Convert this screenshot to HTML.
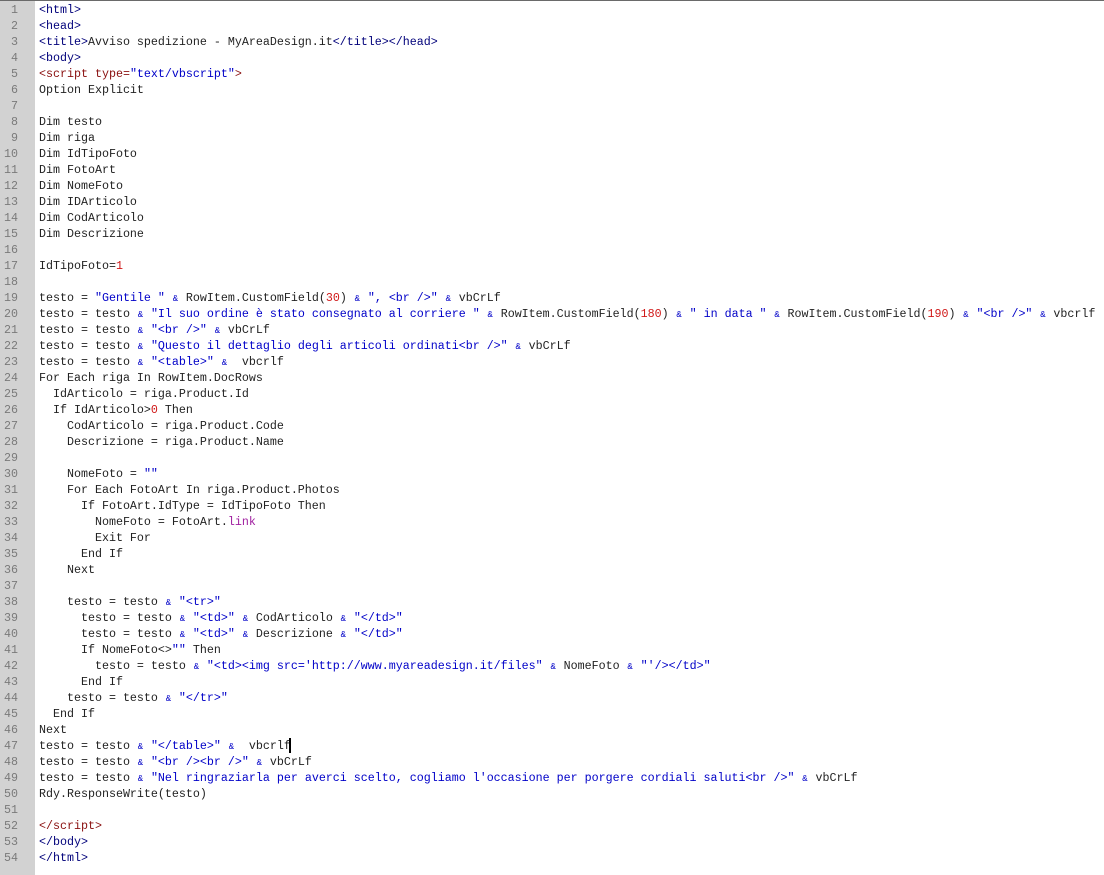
<!DOCTYPE html>
<html><head><meta charset="utf-8"><title>Editor</title>
<style>
html,body{margin:0;padding:0;background:#fff}
body{width:1104px;height:875px;overflow:hidden;position:relative;font-family:"Liberation Mono",monospace;font-size:11.67px;line-height:16px;color:#222}
#bar{position:absolute;left:0;top:0;width:1104px;height:1px;background:#6a6a6a}
#gut{position:absolute;left:0;top:1px;width:35px;height:874px;background:#d2d2d2}
#nums{position:absolute;left:0;top:2px;width:18px;text-align:right;color:#7a7a7a;white-space:pre}
#code{position:absolute;left:39px;top:2px;white-space:pre;margin:0;font:inherit}
i{font-style:normal;color:#0000c8}
i.a{display:inline-block;width:7px;text-align:center;font-size:9px;line-height:10px}
b{font-weight:normal;color:#00007a}
u{text-decoration:none;color:#8a1010}
s{text-decoration:none;color:#d01818}
em{font-style:normal;color:#a020a0}
#caret{position:absolute;left:289px;top:738px;width:2px;height:15px;background:#000}
</style></head><body>
<div id="bar"></div><div id="gut"></div>
<div id="nums">1
2
3
4
5
6
7
8
9
10
11
12
13
14
15
16
17
18
19
20
21
22
23
24
25
26
27
28
29
30
31
32
33
34
35
36
37
38
39
40
41
42
43
44
45
46
47
48
49
50
51
52
53
54</div>
<pre id="code"><b>&lt;html&gt;</b>
<b>&lt;head&gt;</b>
<b>&lt;title&gt;</b>Avviso spedizione - MyAreaDesign.it<b>&lt;/title&gt;&lt;/head&gt;</b>
<b>&lt;body&gt;</b>
<u>&lt;script type=</u><i>"text/vbscript"</i><u>&gt;</u>
Option Explicit

Dim testo
Dim riga
Dim IdTipoFoto
Dim FotoArt
Dim NomeFoto
Dim IDArticolo
Dim CodArticolo
Dim Descrizione

IdTipoFoto=<s>1</s>

testo = <i>"Gentile "</i> <i class="a">&amp;</i> RowItem.CustomField(<s>30</s>) <i class="a">&amp;</i> <i>", &lt;br /&gt;"</i> <i class="a">&amp;</i> vbCrLf
testo = testo <i class="a">&amp;</i> <i>"Il suo ordine è stato consegnato al corriere "</i> <i class="a">&amp;</i> RowItem.CustomField(<s>180</s>) <i class="a">&amp;</i> <i>" in data "</i> <i class="a">&amp;</i> RowItem.CustomField(<s>190</s>) <i class="a">&amp;</i> <i>"&lt;br /&gt;"</i> <i class="a">&amp;</i> vbcrlf
testo = testo <i class="a">&amp;</i> <i>"&lt;br /&gt;"</i> <i class="a">&amp;</i> vbCrLf
testo = testo <i class="a">&amp;</i> <i>"Questo il dettaglio degli articoli ordinati&lt;br /&gt;"</i> <i class="a">&amp;</i> vbCrLf
testo = testo <i class="a">&amp;</i> <i>"&lt;table&gt;"</i> <i class="a">&amp;</i>  vbcrlf
For Each riga In RowItem.DocRows
  IdArticolo = riga.Product.Id
  If IdArticolo&gt;<s>0</s> Then
    CodArticolo = riga.Product.Code
    Descrizione = riga.Product.Name

    NomeFoto = <i>""</i>
    For Each FotoArt In riga.Product.Photos
      If FotoArt.IdType = IdTipoFoto Then
        NomeFoto = FotoArt.<em>link</em>
        Exit For
      End If
    Next

    testo = testo <i class="a">&amp;</i> <i>"&lt;tr&gt;"</i>
      testo = testo <i class="a">&amp;</i> <i>"&lt;td&gt;"</i> <i class="a">&amp;</i> CodArticolo <i class="a">&amp;</i> <i>"&lt;/td&gt;"</i>
      testo = testo <i class="a">&amp;</i> <i>"&lt;td&gt;"</i> <i class="a">&amp;</i> Descrizione <i class="a">&amp;</i> <i>"&lt;/td&gt;"</i>
      If NomeFoto&lt;&gt;<i>""</i> Then
        testo = testo <i class="a">&amp;</i> <i>"&lt;td&gt;&lt;img src='http://www.myareadesign.it/files"</i> <i class="a">&amp;</i> NomeFoto <i class="a">&amp;</i> <i>"'/&gt;&lt;/td&gt;"</i>
      End If
    testo = testo <i class="a">&amp;</i> <i>"&lt;/tr&gt;"</i>
  End If
Next
testo = testo <i class="a">&amp;</i> <i>"&lt;/table&gt;"</i> <i class="a">&amp;</i>  vbcrlf
testo = testo <i class="a">&amp;</i> <i>"&lt;br /&gt;&lt;br /&gt;"</i> <i class="a">&amp;</i> vbCrLf
testo = testo <i class="a">&amp;</i> <i>"Nel ringraziarla per averci scelto, cogliamo l'occasione per porgere cordiali saluti&lt;br /&gt;"</i> <i class="a">&amp;</i> vbCrLf
Rdy.ResponseWrite(testo)

<u>&lt;/script&gt;</u>
<b>&lt;/body&gt;</b>
<b>&lt;/html&gt;</b></pre>
<div id="caret"></div>
</body></html>
